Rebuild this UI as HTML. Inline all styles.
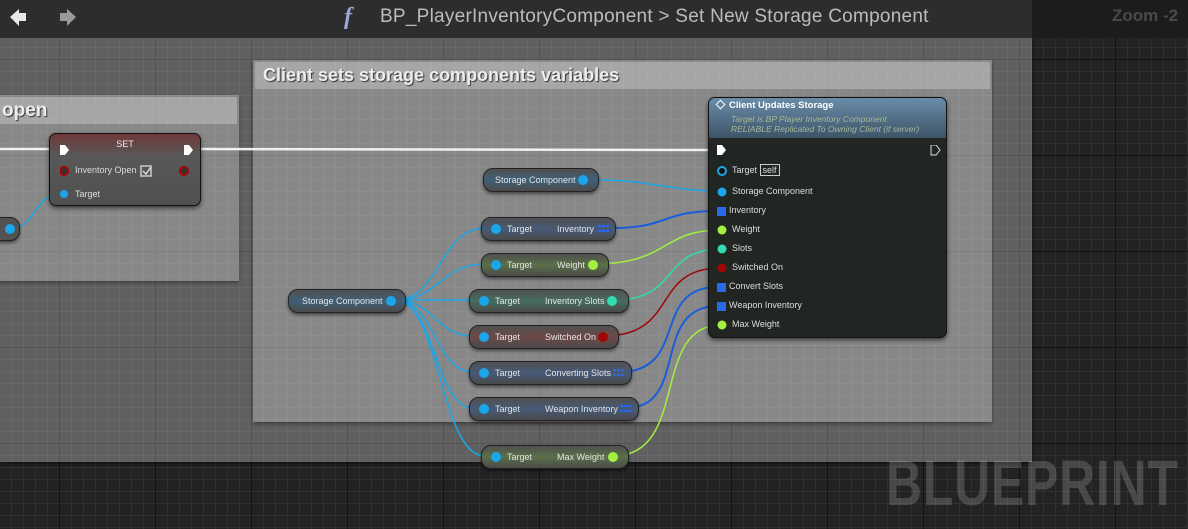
<!DOCTYPE html>
<html><head><meta charset="utf-8"><style>
*{margin:0;padding:0;box-sizing:border-box}
body{width:1188px;height:529px;overflow:hidden;position:relative;font-family:"Liberation Sans",sans-serif;
background-color:#232323;
background-image:
linear-gradient(to right,#121212 1px,transparent 1px),
linear-gradient(to bottom,#121212 1px,transparent 1px),
linear-gradient(to right,#2f2f2f 1px,transparent 1px),
linear-gradient(to bottom,#2f2f2f 1px,transparent 1px);
background-size:96px 96px,96px 96px,12px 12px,12px 12px;
background-position:59px 59px,59px 59px,11px 11px,11px 11px;}
.abs{position:absolute}
.outer{left:0;top:38px;width:1032px;height:424px;background:rgba(255,255,255,0.28);box-shadow:0 2px 4px rgba(0,0,0,.5)}
.cmt{background:rgba(255,255,255,0.25);box-shadow:0 2px 4px rgba(0,0,0,.35)}
.cmth{background:rgba(255,255,255,0.25);color:#eee;font-weight:bold;text-shadow:1px 1px 1px #333;font-size:18px;padding-left:8px;line-height:27px}
.bar{left:0;top:0;width:1188px;height:38px;background:#1c1c1c}
.bar2{left:0;top:0;width:1032px;height:38px;background:#2d2d2d}
.pill{position:absolute;height:24px;border-radius:10px;border:1px solid #222;box-shadow:0 2px 3px rgba(0,0,0,.5);color:#e4e4e4;font-size:9px;line-height:22px;background:#525252}
.pill span{position:absolute}
.pin{position:absolute;width:10px;height:10px;border-radius:50%}
.arr{position:absolute;width:13px;height:9px;display:grid;grid-template-columns:repeat(3,3px);gap:1px}
.arr i{background:#2a6ae8;display:block;height:2px}
.node{position:absolute;border-radius:7px;border:1px solid #111;box-shadow:0 2px 5px rgba(0,0,0,.6)}
.row{position:absolute;color:#ddd;font-size:9px}
</style></head><body>
<div class="abs outer"></div>
<div class="abs cmt" style="left:253px;top:60px;width:739px;height:362px"><div class="cmth" style="margin:2px 2px 0 2px">Client sets storage components variables</div></div>
<div class="abs cmt" style="left:-20px;top:95px;width:259px;height:186px"><div class="cmth" style="margin:2px 2px 0 2px;padding-left:20px;font-size:19px">open</div></div>
<div class="abs bar"></div><div class="abs bar2"></div>
<svg class="abs" style="left:8px;top:7px" width="80" height="22"><path d="M2 10 L11 2 L11 6 L18 6 L18 14 L11 14 L11 19 Z" fill="#e8e8e8"/><path d="M68 10 L59 2 L59 6 L52 6 L52 14 L59 14 L59 19 Z" fill="#9a9a9a"/></svg>
<div class="abs" style="left:344px;top:4px;color:#9aa8d8;font-family:'Liberation Serif',serif;font-style:italic;font-weight:bold;font-size:24px">f</div>
<div class="abs" style="left:380px;top:6px;color:#bcbcbc;font-size:19px;letter-spacing:0.25px">BP_PlayerInventoryComponent &gt; Set New Storage Component</div>
<div class="abs" style="left:1112px;top:6px;color:#4a4a4a;font-size:17px;font-weight:bold">Zoom -2</div>
<div class="abs" style="left:886px;top:446px;color:rgba(255,255,255,0.17);font-size:64px;font-weight:bold;transform:scaleX(.78);transform-origin:left;letter-spacing:1px">BLUEPRINT</div>

<svg class="abs" style="left:0;top:0" width="1188" height="529" fill="none">
<path d="M0 149 C30 149 40 149 60 149 M195 149 L718 150" stroke="#f0f0f0" stroke-width="2.5"/>
<path d="M6 229 C40 229 30 194 63 194" stroke="#1aa6e8" stroke-width="1.5"/>
<path d="M599 180 C650 180 670 191 718 191" stroke="#1aa6e8" stroke-width="1.5"/>
<g stroke="#1aa6e8" stroke-width="1.5">
<path d="M395 300 C440 300 440 228 485 228"/>
<path d="M395 300 C440 300 440 264 485 264"/>
<path d="M395 300 L473 300"/>
<path d="M395 300 C435 300 435 336 473 336"/>
<path d="M395 300 C435 300 435 372 473 372"/>
<path d="M395 300 C435 300 435 408 473 408"/>
<path d="M395 300 C440 300 440 456 485 456"/>
</g>
<path d="M612 228 C670 228 660 211 718 211" stroke="#1a5fd8" stroke-width="2"/>
<path d="M593 264 C670 264 660 230 721 230" stroke="#a4f040" stroke-width="1.5"/>
<path d="M614 300 C680 300 660 249 721 249" stroke="#30dcb0" stroke-width="1.5"/>
<path d="M603 336 C680 336 650 268 721 268" stroke="#a00808" stroke-width="1.5"/>
<path d="M619 372 C690 372 650 287 718 287" stroke="#1a5fd8" stroke-width="2"/>
<path d="M626 408 C690 408 650 306 718 306" stroke="#1a5fd8" stroke-width="2"/>
<path d="M613 456 C690 456 650 325 721 325" stroke="#a4f040" stroke-width="1.5"/>
</svg>

<!-- SET node -->
<div class="node" style="left:49px;top:133px;width:152px;height:73px;background:linear-gradient(#703838 0,#585858 22px,#505050)">
<div style="text-align:center;color:#eee;font-size:9px;margin-top:5px">SET</div>
<svg class="abs" style="left:10px;top:11px" width="140" height="60"><path d="M0 0 L5 0 L9 5 L5 10 L0 10Z" fill="#fff"/><path d="M124 0 L129 0 L133 5 L129 10 L124 10Z" fill="#fff"/>
<circle cx="4" cy="26" r="4" fill="#333" stroke="#a00" stroke-width="2"/><circle cx="124" cy="26" r="4" fill="#333" stroke="#a00" stroke-width="2"/>
<rect x="81" y="21" width="10" height="10" fill="none" stroke="#ccc" stroke-width="1.5"/><path d="M83 26 l3 3 l5 -7" stroke="#ddd" stroke-width="1.5" fill="none"/>
<circle cx="4" cy="49" r="4" fill="#1aa6e8"/></svg>
<div class="row" style="left:25px;top:31px">Inventory Open</div>
<div class="row" style="left:25px;top:55px">Target</div>
</div>
<div class="pill" style="left:-14px;top:217px;width:34px"><div class="pin" style="left:18px;top:6px;background:#1aa6e8"></div></div>

<!-- pills -->
<div class="pill" style="left:483px;top:168px;width:116px;background:linear-gradient(#505050,#3f6078 50%,#4a4a4a)"><span style="left:11px">Storage Component</span><div class="pin" style="left:94px;top:6px;background:#1aa6e8"></div></div>
<div class="pill" style="left:288px;top:289px;width:118px;background:linear-gradient(#505050,#3f6078 50%,#4a4a4a)"><span style="left:13px">Storage Component</span><div class="pin" style="left:97px;top:6px;background:#1aa6e8"></div></div>

<div class="pill" style="left:481px;top:217px;width:135px;background:linear-gradient(#505050,#465a78 50%,#4a4a4a)"><div class="pin" style="left:9px;top:6px;background:#1aa6e8"></div><span style="left:25px">Target</span><span style="left:75px">Inventory</span><div class="arr" style="left:116px;top:7px"><i></i><i></i><i></i><i></i><i></i><i></i></div></div>
<div class="pill" style="left:481px;top:253px;width:128px;background:linear-gradient(#505050,#5a7048 50%,#4a4a4a)"><div class="pin" style="left:9px;top:6px;background:#1aa6e8"></div><span style="left:25px">Target</span><span style="left:75px">Weight</span><div class="pin" style="left:106px;top:6px;background:#a4f040"></div></div>
<div class="pill" style="left:469px;top:289px;width:160px;background:linear-gradient(#505050,#466e60 50%,#4a4a4a)"><div class="pin" style="left:9px;top:6px;background:#1aa6e8"></div><span style="left:25px">Target</span><span style="left:75px">Inventory Slots</span><div class="pin" style="left:137px;top:6px;background:#30dcb0"></div></div>
<div class="pill" style="left:469px;top:325px;width:150px;background:linear-gradient(#505050,#6e4848 50%,#4a4a4a)"><div class="pin" style="left:9px;top:6px;background:#1aa6e8"></div><span style="left:25px">Target</span><span style="left:75px">Switched On</span><div class="pin" style="left:128px;top:6px;background:#a00808"></div></div>
<div class="pill" style="left:469px;top:361px;width:163px;background:linear-gradient(#505050,#465a78 50%,#4a4a4a)"><div class="pin" style="left:9px;top:6px;background:#1aa6e8"></div><span style="left:25px">Target</span><span style="left:75px">Converting Slots</span><div class="arr" style="left:143px;top:7px"><i></i><i></i><i></i><i></i><i></i><i></i></div></div>
<div class="pill" style="left:469px;top:397px;width:170px;background:linear-gradient(#505050,#465a78 50%,#4a4a4a)"><div class="pin" style="left:9px;top:6px;background:#1aa6e8"></div><span style="left:25px">Target</span><span style="left:75px">Weapon Inventory</span><div class="arr" style="left:150px;top:7px"><i></i><i></i><i></i><i></i><i></i><i></i></div></div>
<div class="pill" style="left:481px;top:445px;width:148px;background:linear-gradient(#505050,#5a7048 50%,#4a4a4a)"><div class="pin" style="left:9px;top:6px;background:#1aa6e8"></div><span style="left:25px">Target</span><span style="left:75px">Max Weight</span><div class="pin" style="left:126px;top:6px;background:#a4f040"></div></div>

<!-- big node -->
<div class="node" style="left:708px;top:97px;width:239px;height:241px;background:#222622;overflow:hidden">
<div style="height:40px;background:linear-gradient(#6a8ca8,#3d5468);padding:2px 0 0 8px">
<div style="color:#fff;font-size:9.5px;font-weight:bold"><span style="display:inline-block;width:7px;height:7px;border:1.5px solid #fff;transform:rotate(45deg);margin-right:5px"></span>Client Updates Storage</div>
<div style="color:#a8b898;font-size:8.5px;font-style:italic;padding-left:14px;line-height:10px;margin-top:3px">Target is BP Player Inventory Component<br>RELIABLE Replicated To Owning Client (if server)</div></div>
<svg class="abs" style="left:8px;top:47px" width="225" height="190"><path d="M0 0 L5 0 L9 5 L5 10 L0 10Z" fill="#fff"/><path d="M214 0 L219 0 L223 5 L219 10 L214 10Z" fill="none" stroke="#ddd"/>
<circle cx="5" cy="26" r="4" fill="#111" stroke="#1aa6e8" stroke-width="2"/>
<circle cx="5" cy="47" r="4.5" fill="#1aa6e8"/>
<circle cx="5" cy="85" r="4.5" fill="#a4f040"/>
<circle cx="5" cy="104" r="4.5" fill="#30dcb0"/>
<circle cx="5" cy="123" r="4.5" fill="#a00808"/>
<circle cx="5" cy="180" r="4.5" fill="#a4f040"/>
<g fill="#2a6ae8"><rect x="0" y="62" width="9" height="9"/><rect x="0" y="138" width="9" height="9"/><rect x="0" y="157" width="9" height="9"/></g></svg>
<div class="row" style="left:23px;top:67px">Target <span style="border:1px solid #ccc;padding:0 2px">self</span></div>
<div class="row" style="left:23px;top:88px">Storage Component</div>
<div class="row" style="left:20px;top:107px">Inventory</div>
<div class="row" style="left:23px;top:126px">Weight</div>
<div class="row" style="left:23px;top:145px">Slots</div>
<div class="row" style="left:23px;top:164px">Switched On</div>
<div class="row" style="left:20px;top:183px">Convert Slots</div>
<div class="row" style="left:20px;top:202px">Weapon Inventory</div>
<div class="row" style="left:23px;top:221px">Max Weight</div>
</div>
</body></html>
